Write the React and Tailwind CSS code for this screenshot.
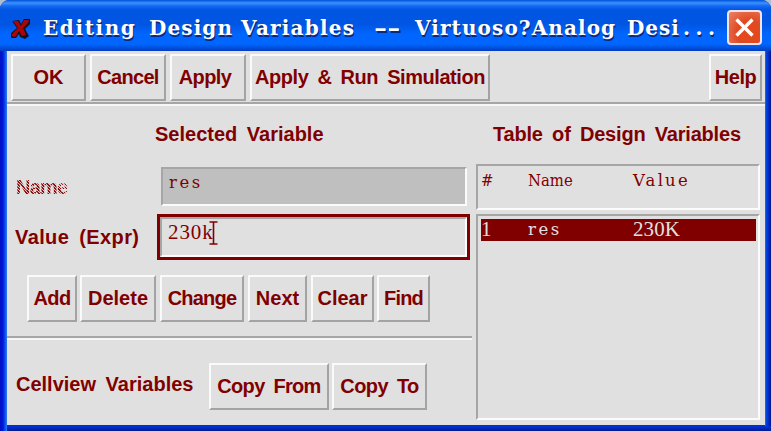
const label =
  "font-['Liberation_Sans',Arial,sans-serif] font-bold text-[20px] leading-[24px] whitespace-nowrap text-[#800000]";
const serif = "font-['DejaVu_Serif_Condensed','DejaVu_Serif',serif] text-[16.5px] leading-[22px] whitespace-nowrap";
const digits = "font-['Liberation_Serif',serif] text-[21px] leading-[20px]";
const sunken = "border-2 border-t-[#a6a6a6] border-l-[#a6a6a6] border-b-[#fbfbfb] border-r-[#fbfbfb]";

function MotifButton({ className, children }) {
  return (
    <button
      className={`${label} flex h-[47px] shrink-0 items-center justify-center border-2 border-t-[#fafafa] border-l-[#fafafa] border-b-[#a3a3a3] border-r-[#a3a3a3] bg-[#e0e0e0] pb-[2px] ${className}`}
    >
      {children}
    </button>
  );
}

const titleWords = [
  ["Editing", "w-[106px] tracking-[1.6px]"],
  ["Design", "w-[92px] tracking-[1.1px]"],
  ["Variables", "w-[133px] tracking-[1.2px]"],
  ["--", "w-[24px] mr-[17px] origin-left scale-x-[1.6]"],
  ["Virtuoso?Analog", "w-[212px] tracking-[1.1px]"],
  ["Desi", "w-[56px] tracking-[1px]"],
  ["...", "w-[40px] tracking-[5.5px]"],
];

function TitleBar() {
  return (
    <header className="flex h-[51px] shrink-0 items-center rounded-t-[9px] bg-[linear-gradient(180deg,#0050d8_0px,#3a93ff_3px,#1468f0_6px,#0055e2_10px,#0055e2_24px,#0066ff_34px,#0066ff_44px,#0050dc_48px,#003cc0_51px)]">
      <svg className="ml-[11px] mt-[6px] h-[22px] w-[20px] shrink-0" viewBox="0 0 20 22">
        <path d="M1 3 L8 2 L10 6 L13 1 L19 1 L19 6 L14 11 L18 18 L14 21 L9 19 L8 16 L5 20 L0 20 L0 15 L6 10 Z" fill="#1b1020" />
        <path d="M2 3 L7 3 L10 8 L13 2 L18 2 L17 5 L12 10 L15 17 L11 18 L8 13 L4 19 L1 18 L1 16 L7 10 Z" fill="#a80608" />
      </svg>
      <h1 className="ml-[12px] mt-[4px] flex whitespace-nowrap font-['DejaVu_Serif',serif] text-[20px] leading-[26px] font-bold text-white [text-shadow:1px_2px_0_#0a2a80]">
        {titleWords.map(([word, cls]) => (
          <span key={word} className={`shrink-0 ${cls}`}>
            {word}
          </span>
        ))}
      </h1>
      <button className="ml-auto mr-[9px] mt-[4px] flex h-[35px] w-[35px] shrink-0 items-center justify-center rounded-[4px] border-2 border-[#f1e4ec] bg-[radial-gradient(circle_at_70%_70%,#e5481a_0%,#e04a22_45%,#e98468_100%)]">
        <svg className="h-[21px] w-[21px]" viewBox="0 0 21 21">
          <path d="M2.5 2.5 L18.5 18.5 M18.5 2.5 L2.5 18.5" stroke="#fff" strokeWidth="3.4" />
        </svg>
      </button>
    </header>
  );
}

function Divider() {
  return <div className="h-[4px] shrink-0 border-t-2 border-b-2 border-t-[#a6a6a6] border-b-[#f6f6f6]" />;
}

function LeftPanel() {
  return (
    <section className="flex w-[465px] shrink-0 flex-col">
      <h2 className={`${label} ml-[148px] mt-[16px] [word-spacing:4px]`}>Selected Variable</h2>
      <div className="mt-[21px] flex h-[40px]">
        <div
          className={`${label} w-[154px] bg-[repeating-linear-gradient(45deg,#8a1010_0px,#8a1010_1.2px,#dcc4c4_1.2px,#dcc4c4_2.1px)] bg-clip-text pl-[9px] pt-[8px] tracking-[-0.8px] text-transparent`}
        >
          Name
        </div>
        <div className={`${sunken} ${serif} h-[39px] w-[306px] bg-[#bfbfbf] pl-[6px] pt-[3px] text-[#800000]`}>
          <span className="font-['DejaVu_Serif',serif] tracking-[2.6px]">res</span>
        </div>
      </div>
      <div className="mt-[7px] flex h-[46px]">
        <div className={`${label} w-[150px] pl-[8px] pt-[11px] tracking-[0.4px] [word-spacing:4px]`}>Value (Expr)</div>
        <div className="h-[46px] w-[313px] border-[3px] border-[#800000]">
          <div className={`${sunken} relative flex h-full pl-[6px] pt-[3px] text-[#800000]`}>
            <span className={`${digits} tracking-[0.9px]`}>230k</span>
            <svg className="absolute left-[47px] top-[2px] h-[24px] w-[9px]" viewBox="0 0 9 24">
              <path d="M0.5 1 H8.5 M0.5 23 H8.5 M4.5 1 V23" stroke="#800000" strokeWidth="1.6" fill="none" />
            </svg>
          </div>
        </div>
      </div>
      <div className="mt-[15px] flex h-[47px] gap-[4px] pl-[20px]">
        <MotifButton className="w-[50px] tracking-[-0.6px]">Add</MotifButton>
        <MotifButton className="-ml-px w-[76px]">Delete</MotifButton>
        <MotifButton className="w-[84px] tracking-[-0.8px]">Change</MotifButton>
        <MotifButton className="w-[59px]">Next</MotifButton>
        <MotifButton className="w-[63px]">Clear</MotifButton>
        <MotifButton className="-ml-px w-[53px] tracking-[-0.8px]">Find</MotifButton>
      </div>
      <div className="mt-[14px] flex flex-col">
        <Divider />
      </div>
      <div className="mt-[23px] flex">
        <div className={`${label} w-[202px] pl-[9px] pt-[9px] [word-spacing:4px]`}>Cellview Variables</div>
        <MotifButton className="w-[120px] tracking-[-0.7px] [word-spacing:4px]">Copy From</MotifButton>
        <MotifButton className="ml-[3px] w-[95px] tracking-[-0.6px] [word-spacing:4px]">Copy To</MotifButton>
      </div>
    </section>
  );
}

function RightPanel() {
  return (
    <section className="ml-[4px] flex w-[284px] shrink-0 flex-col">
      <h2 className={`${label} ml-[17px] mt-[16px] tracking-[-0.2px] [word-spacing:4px]`}>Table of Design Variables</h2>
      <div className={`${sunken} ${serif} mt-[18px] flex h-[46px] pl-[3px] pt-[4px] text-[#800000]`}>
        <span className="w-[47px]">#</span>
        <span className="w-[105px]">Name</span>
        <span className="font-['DejaVu_Serif',serif] tracking-[2.2px]">Value</span>
      </div>
      <div className={`${sunken} mt-[4px] h-[206px] pt-[3px] pl-[3px] pr-[2px]`}>
        <div className={`${serif} flex h-[22px] bg-[#800000] text-[#e0e0e0]`}>
          <span className={`w-[47px] ${digits}`}>1</span>
          <span className="w-[105px] font-['DejaVu_Serif',serif] tracking-[2.6px]">res</span>
          <span className={`${digits} tracking-[0.1px]`}>230K</span>
        </div>
      </div>
    </section>
  );
}

export default function App() {
  return (
    <div className="h-[431px] w-[771px] overflow-hidden bg-[#aebdcf]">
      <div className="flex h-full flex-col rounded-t-[9px] bg-[#0030d0]">
        <TitleBar />
        <div className="flex h-[380px] bg-[linear-gradient(180deg,transparent_376px,#001a90_380px)]">
          <div className="w-[7px] shrink-0 bg-[linear-gradient(90deg,#0010c8_0px,#0018d8_3px,#0a50e8_5px,#2a78f0_7px)]" />
          <main className="flex h-[374px] w-[758px] shrink-0 flex-col bg-[#e0e0e0]">
            <nav className="mt-[3px] flex h-[47px] shrink-0 gap-[4px] pl-[4px] pr-[3px]">
              <MotifButton className="w-[75px]">OK</MotifButton>
              <MotifButton className="w-[76px] tracking-[-0.7px]">Cancel</MotifButton>
              <MotifButton className="w-[76px] pr-[6px] tracking-[-0.6px]">Apply</MotifButton>
              <MotifButton className="w-[240px] tracking-[-0.45px] [word-spacing:4px]">Apply &amp; Run Simulation</MotifButton>
              <MotifButton className="ml-auto w-[53px] tracking-[-0.5px]">Help</MotifButton>
            </nav>
            <div className="mt-[1px] flex flex-col">
              <Divider />
            </div>
            <div className="flex">
              <LeftPanel />
              <RightPanel />
            </div>
          </main>
          <div className="h-[375px] w-[6px] shrink-0 bg-[linear-gradient(90deg,#3a78e8_0px,#0048e0_1px,#0030d0_3px,#001490_6px)]" />
        </div>
      </div>
    </div>
  );
}
